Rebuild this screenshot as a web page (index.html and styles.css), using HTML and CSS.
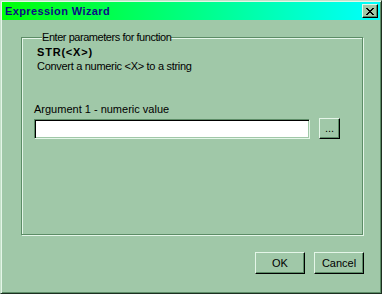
FILE: index.html
```html
<!doctype html>
<html lang="en">
 <head>
  <meta charset="UTF-8">
  <title>Expression Wizard</title>
  <link rel="stylesheet" href="styles.css">
 </head>
 <body>
  <div class="window">
   <div class="titlebar">
    <span class="title">Expression Wizard</span>
    <button class="close" type="button" aria-label="Close">
     <svg width="8" height="7" viewBox="0 0 8 7">
      <path d="M0 0h2v1h1v1h2v-1h1v-1h2v1h-1v1h-1v1h-1v1h1v1h1v1h1v1h-2v-1h-1v-1h-2v1h-1v1h-2v-1h1v-1h1v-1h1v-1h-1v-1h-1v-1h-1z" fill="#000"/>
     </svg>
    </button>
   </div>
   <div class="dialog-body">
    <fieldset class="params">
     <legend>Enter parameters for function</legend>
     <div class="fn-name">STR(&lt;X&gt;)</div>
     <div class="fn-desc">Convert a numeric &lt;X&gt; to a string</div>
     <div class="arg">
      <label for="arg1">Argument 1 - numeric value</label>
      <div class="arg-row">
       <input type="text" id="arg1">
       <button type="button" class="btn btn-browse">...</button>
      </div>
     </div>
    </fieldset>
    <div class="actions">
     <button type="button" class="btn">OK</button>
     <button type="button" class="btn">Cancel</button>
    </div>
   </div>
  </div>
 </body>
</html>
```

FILE: styles.css
```css
html, body {
  margin: 0;
  padding: 0;
}
body {
  font-family: "Liberation Sans", Arial, sans-serif;
  font-size: 11px;
  line-height: 13px;
  color: #000;
  background-color: #a0c8a8;
}
.window {
  box-sizing: border-box;
  width: 382px;
  height: 294px;
  padding: 1px;
  background-color: #a0c8a8;
  border: 1px solid;
  border-color: #c4e0c8 #1c3020 #1c3020 #c4e0c8;
  box-shadow: inset 1px 1px 0 #e4f6e8, inset -1px -1px 0 #5c8c66;
  display: flex;
  flex-direction: column;
}
.titlebar {
  height: 18px;
  display: flex;
  align-items: center;
  justify-content: space-between;
  background: linear-gradient(to right, #00ff08, #00ffff);
}
.title {
  padding-left: 3px;
  font-weight: bold;
  letter-spacing: 0.4px;
  color: #0c0c84;
}
.close {
  box-sizing: border-box;
  width: 16px;
  height: 14px;
  margin-right: 2px;
  padding: 0;
  display: flex;
  align-items: center;
  justify-content: center;
  background-color: #a0c8a8;
  border: 1px solid;
  border-color: #e4f6e8 #000 #000 #e4f6e8;
  box-shadow: inset -1px -1px 0 #5c8c66;
}
.dialog-body {
  flex: 1;
  display: flex;
  flex-direction: column;
}
.params {
  box-sizing: border-box;
  height: 204px;
  margin: 11px 17px 0 19px;
  padding: 2px 21px 0 15px;
  border: 1px solid #5c8c66;
  box-shadow: 1px 1px 0 #e4f6e8, inset 1px 1px 0 #e4f6e8;
}
.params legend {
  margin-left: 5px;
  padding: 0;
  letter-spacing: -0.45px;
  background-color: #a0c8a8;
}
.fn-name {
  font-weight: bold;
  letter-spacing: 0.8px;
}
.fn-desc {
  margin-top: 1px;
  letter-spacing: -0.3px;
}
.arg {
  margin: 30px 0 0 -3px;
}
.arg label {
  display: block;
}
.arg-row {
  display: flex;
  align-items: flex-end;
  gap: 9px;
  margin-top: 2px;
}
.arg-row input {
  box-sizing: border-box;
  width: 276px;
  height: 20px;
  margin: 0;
  padding: 1px 3px;
  font: inherit;
  background-color: #fff;
  border: 1px solid;
  border-color: #5c8c66 #e4f6e8 #e4f6e8 #5c8c66;
  box-shadow: inset 1px 1px 0 #000, inset -1px -1px 0 #a0c8a8;
  outline: none;
}
.btn {
  box-sizing: border-box;
  width: 50px;
  height: 22px;
  padding: 0;
  font: inherit;
  color: #000;
  background-color: #a0c8a8;
  border: 1px solid;
  border-color: #e4f6e8 #000 #000 #e4f6e8;
  box-shadow: inset -1px -1px 0 #5c8c66;
}
.btn-browse {
  width: 21px;
  height: 21px;
  line-height: 11px;
}
.actions {
  display: flex;
  justify-content: flex-end;
  gap: 9px;
  margin: 17px 16px 0 0;
}
```
